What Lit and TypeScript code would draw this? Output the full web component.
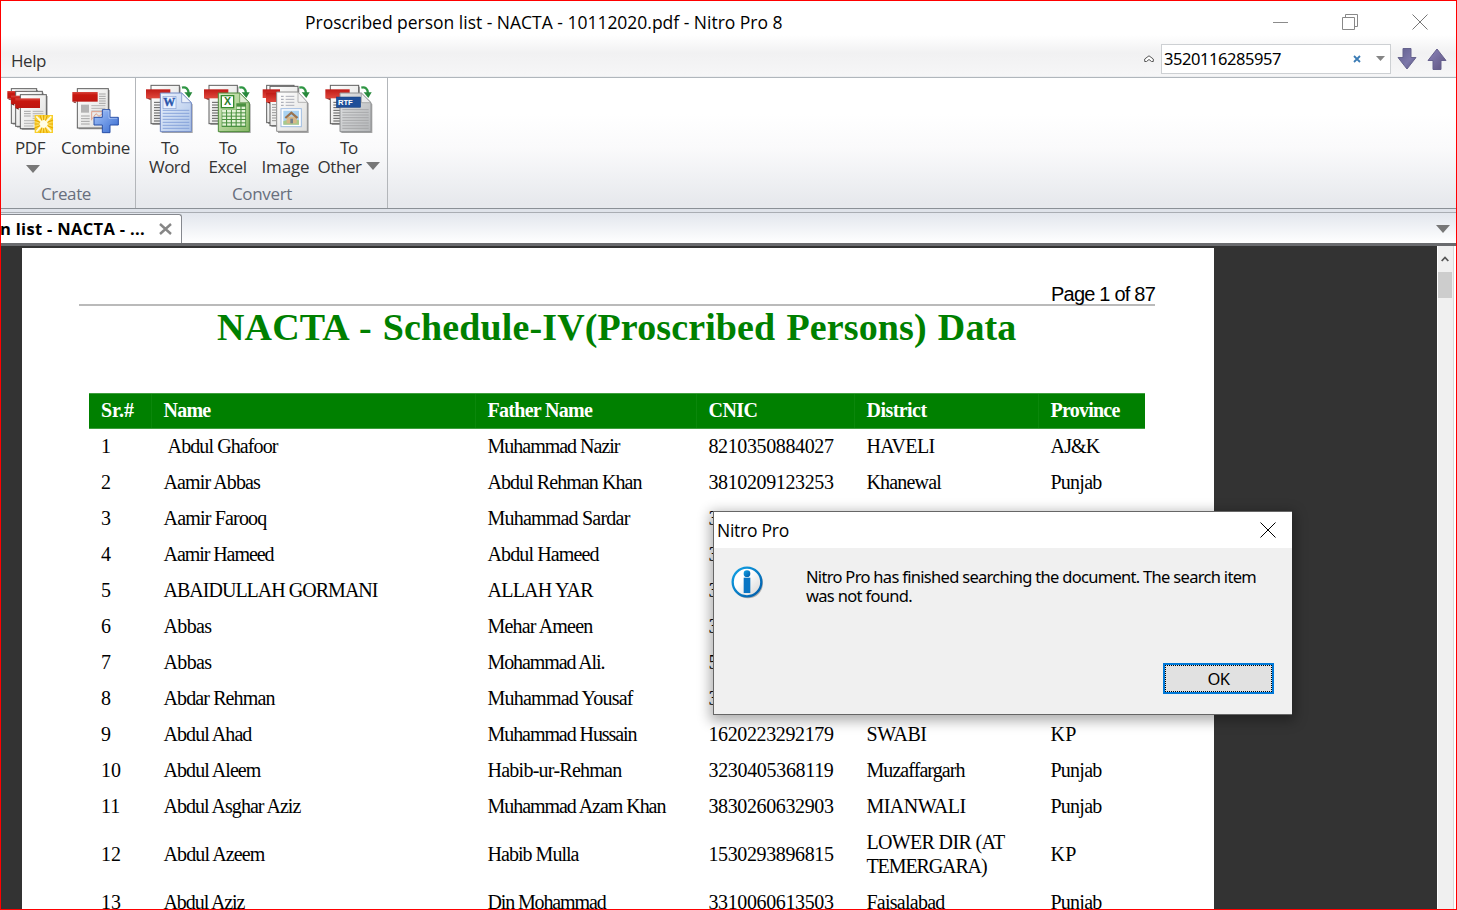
import { LitElement, html, svg, css } from "lit";
import { customElement } from "lit/decorators.js";

const SANS = '"Open Sans", "Noto Sans", sans-serif';
const UI = '"Noto Sans", "Open Sans", sans-serif';
const SERIF = '"Liberation Serif", serif';
const ARIAL = '"Liberation Sans", sans-serif';

const pen = document.createElement("canvas").getContext("2d")!;

/** Sets a line of text with its tracking adjusted to the given advance width. */
function fit(text: string, width: number, font: string) {
  pen.font = font;
  const spacing = (width - pen.measureText(text).width) / Math.max(1, text.length);
  return html`<span class="fit" style="letter-spacing:${spacing.toFixed(3)}px">${text}</span>`;
}

type Cell = [string, number];
const HEAD: Cell[] = [["Sr.#", 33], ["Name", 47], ["Father Name", 105], ["CNIC", 49], ["District", 60], ["Province", 69]];
const ROWS: Cell[][] = [
  [["1", 10], ["\u00a0Abdul Ghafoor", 114], ["Muhammad Nazir", 132], ["8210350884027", 125], ["HAVELI", 68], ["AJ&K", 49]],
  [["2", 10], ["Aamir Abbas", 97.5], ["Abdul Rehman Khan", 154], ["3810209123253", 125], ["Khanewal", 74.5], ["Punjab", 51]],
  [["3", 10], ["Aamir Farooq", 103], ["Muhammad Sardar", 142], ["3440232213253", 125], ["Sialkot", 52], ["Punjab", 51]],
  [["4", 10], ["Aamir Hameed", 110], ["Abdul Hameed", 111], ["3", 10], ["", 0], ["", 0]],
  [["5", 10], ["ABAIDULLAH GORMANI", 214], ["ALLAH YAR", 106], ["3", 10], ["", 0], ["", 0]],
  [["6", 10], ["Abbas", 48], ["Mehar Ameen", 106], ["3", 10], ["", 0], ["", 0]],
  [["7", 10], ["Abbas", 48], ["Mohammad Ali.", 118], ["5", 10], ["", 0], ["", 0]],
  [["8", 10], ["Abdar Rehman", 111], ["Muhammad Yousaf", 146], ["3", 10], ["", 0], ["", 0]],
  [["9", 10], ["Abdul Ahad", 89], ["Muhammad Hussain", 149], ["1620223292179", 125], ["SWABI", 60], ["KP", 26]],
  [["10", 20], ["Abdul Aleem", 98], ["Habib-ur-Rehman", 134], ["3230405368119", 125], ["Muzaffargarh", 98], ["Punjab", 51]],
  [["11", 19], ["Abdul Asghar Aziz", 139], ["Muhammad Azam Khan", 179], ["3830260632903", 125], ["MIANWALI", 99], ["Punjab", 51]],
  [["12", 20], ["Abdul Azeem", 102], ["Habib Mulla", 91], ["1530293896815", 125], ["LOWER DIR (AT|TEMERGARA)", 138], ["KP", 26]],
  [["13", 20], ["Abdul Aziz", 82], ["Din Mohammad", 118], ["3310060613503", 125], ["Faisalabad", 78], ["Punjab", 51]],
];

const defs = svg`<defs>
  <linearGradient id="red" x2="0" y2="1"><stop offset="0" stop-color="#d8473f"/><stop offset=".3" stop-color="#c8180f"/><stop offset="1" stop-color="#bd1610"/></linearGradient>
  <linearGradient id="red2" x2="0" y2="1"><stop offset="0" stop-color="#bf1a16"/><stop offset="1" stop-color="#e0473c"/></linearGradient>
  <linearGradient id="page" x2="1" y2="1"><stop offset="0" stop-color="#fff"/><stop offset="1" stop-color="#dededc"/></linearGradient>
  <linearGradient id="plus" x2="1" y2="1"><stop offset="0" stop-color="#a9c8fb"/><stop offset="1" stop-color="#3569cf"/></linearGradient>
  <linearGradient id="blue" x2="1" y2="1"><stop offset="0" stop-color="#eef4fd"/><stop offset="1" stop-color="#a9c1e8"/></linearGradient>
  <linearGradient id="green" x2="1" y2="1"><stop offset="0" stop-color="#d9ecc6"/><stop offset="1" stop-color="#86b865"/></linearGradient>
  <linearGradient id="grey" x2="1" y2="1"><stop offset="0" stop-color="#e3e4e5"/><stop offset="1" stop-color="#b4b6b8"/></linearGradient>
  <radialGradient id="glow"><stop offset="0" stop-color="#fff"/><stop offset=".4" stop-color="#fff09a"/><stop offset="1" stop-color="#f8cf2c"/></radialGradient>
</defs>`;

const sheet = (x: number, y: number, w: number, h: number) => svg`
  <rect x=${x + 4} y=${y + 4} width=${w} height=${h} fill="#000" opacity=".35"/>
  <rect x=${x} y=${y} width=${w} height=${h} fill="url(#page)" stroke="#5f5f5f" stroke-width="3"/>`;
const bar = (x: number, y: number, w: number, h: number) => svg`
  <rect x=${x} y=${y} width=${w} height=${h} fill="url(#red)"/>
  <path d="M${x} ${y + h}h10v5z" fill="#75100c"/>`;
const lines = (x: number, y: number, w: number, n: number, gap: number, c: string) =>
  Array.from({ length: n }, (_, i) => svg`<path d="M${x} ${y + i * gap}h${w}" stroke=${c} stroke-width="2.6"/>`);
const arrow = (x: number) => svg`
  <path d="M${x} 35c12-3 19 3 20 17" fill="none" stroke="#2f9644" stroke-width="7"/>
  <path d="M${x + 7} 49h24l-10 17z" fill="#27883b"/>`;
const source = (x: number) => svg`
  ${sheet(x + 15, 28, 85, 115)}
  ${lines(x + 24, 79, 20, 8, 8, "#444")}
  <rect x=${x} y="40" width="73" height="27" fill="url(#red2)"/>
  <path d="M${x} 67h14v5z" fill="#8c120e"/>`;
const front = (x: number, fill: string, stroke: string) => svg`
  <path d="M${x + 4} 57h64l29 28v86H${x + 4}z" fill="#000" opacity=".35"/>
  <path d="M${x} 51h64l29 29v87H${x}z" fill=${fill} stroke=${stroke} stroke-width="3"/>
  <path d="M${x + 64} 51v29h29z" fill="#fff" fill-opacity=".6" stroke=${stroke} stroke-width="2"/>`;

const icon = (viewBox: string, body: unknown) =>
  html`<svg class="icon" viewBox=${viewBox}>${defs}${body}</svg>`;

const pdfIcon = icon("15 24 150 150", svg`
  ${sheet(34, 38, 76, 104)}${bar(22, 45, 60, 23)}
  ${sheet(47, 46, 80, 105)}${bar(33, 59, 60, 25)}
  ${sheet(61, 56, 78, 102)}${bar(46, 67, 74, 29)}
  ${lines(72, 106, 20, 3, 7, "#999")}${lines(98, 106, 32, 6, 7, "#aaa")}
  ${lines(72, 134, 28, 3, 8, "#aaa")}
  <rect x="104" y="117" width="55" height="54" fill="url(#glow)"/>
  <path d="M120 118l6 17M142 118l-6 17M104 132l17 7M159 132l-17 7M104 156l17-7M159 156l-17-7M120 171l6-17M142 171l-6-17M131 117v15M131 157v14M104 144h14M145 144h14" stroke="#e9aa00" stroke-width="3.600"/>
  <path d="M109 121l14 15M154 121l-14 15M109 167l14-15M154 167l-14-15" stroke="#fffbe0" stroke-width="5"/>
  <circle cx="131" cy="144" r="11" fill="#fffde8"/>`);

const combineIcon = icon("213 24 150 150", svg`
  ${sheet(232, 38, 93, 118)}
  ${lines(297, 54, 20, 5, 7, "#999")}
  <rect x="243" y="86" width="24" height="24" fill="#b4b4b4"/>
  ${lines(274, 89, 42, 3, 8, "#aaa")}${lines(243, 120, 26, 4, 8, "#999")}
  <path d="M275 133v-26h34M277 128l11-15 9 8 10-8" fill="none" stroke="#e0a28e" stroke-width="3"/>
  ${bar(217, 48, 76, 29)}
  <path d="M307 101h23v23h25v23h-25v23h-23v-23h-25v-23h25z" fill="url(#plus)" stroke="#2950a8" stroke-width="3"/>
  <path d="M310 104h17v23h25" fill="none" stroke="#d5e4ff" stroke-width="2" opacity=".7"/>`);

const wordIcon = icon("435 24 150 150", svg`
  ${source(438)}${front(481, "url(#blue)", "#7089c4")}
  ${lines(488, 103, 80, 7, 9, "#7f9cd8")}
  <rect x="489" y="61" width="39" height="37" fill="#e9f1ff" stroke="#8aa3d4" stroke-width="2"/>
  <text class="glyph" x="508" y="91" font-size="36" text-anchor="middle" fill="#2b57ad" stroke="#2b57ad">W</text>
  ${arrow(546)}`);

const excelIcon = icon("21 24 150 150", svg`
  ${source(24)}${front(67, "url(#green)", "#4b8a38")}
  <path d="M121 82h29v71H77v-52h44z" fill="#4a9140"/>
  ${[0, 1, 2, 3, 4, 5].map((r) => [0, 1, 2, 3, 4].map((c) => svg`<rect x=${79 + c * 14.4} y=${r < 1 && c < 3 ? 102 : 92 + r * 10} width="11" height="7" fill="#e3f2d6"/>`))}
  <rect x="76" y="59" width="37" height="36" fill="#fff" stroke="#348a2b" stroke-width="4"/>
  <text class="glyph sans" x="94.500" y="88" font-size="32" text-anchor="middle" fill="#2b7d2a">X</text>
  ${arrow(130)}`);

const imageIcon = icon("193 24 150 150", svg`
  ${sheet(210, 28, 82, 112)}${sheet(220, 31, 84, 118)}
  <rect x="198" y="40" width="52" height="26" fill="url(#red2)"/>
  <rect x="208" y="50" width="44" height="28" fill="url(#red2)"/><path d="M208 78h12v5z" fill="#8c120e"/>
  ${lines(226, 86, 12, 7, 8, "#888")}
  <path d="M244 54h62l30 28v89h-92z" fill="#000" opacity=".35"/>
  <path d="M240 48h64l28 31v87h-92z" fill="url(#page)" stroke="#8e8e8e" stroke-width="3"/>
  <path d="M304 48v31h28z" fill="#f3f3f3" stroke="#999" stroke-width="2"/>
  ${lines(253, 61, 8, 4, 9, "#8e93a0")}${lines(267, 61, 26, 4, 9, "#a2a6b0")}
  <rect x="253" y="98" width="61" height="54" fill="#fff" stroke="#9fbce2" stroke-width="3"/>
  <rect x="260" y="104" width="47" height="42" fill="#a9d2f2"/>
  <path d="M260 136c14-8 32-6 47-3v13h-47z" fill="#a9c98b"/>
  <path d="M270 122h30v20h-30z" fill="#d7b789"/><path d="M264 124l20-18 21 18-5 4-16-13-16 13z" fill="#9a7350"/>
  <path d="M281 128h8v14h-8z" fill="#73808c"/>
  ${arrow(308)}`);

const otherIcon = icon("383 24 150 150", svg`
  ${source(387)}${front(431, "url(#grey)", "#8f9193")}
  ${lines(438, 101, 79, 8, 8, "#a2a4a6")}
  <rect x="420" y="63" width="73" height="31" fill="#1f4f99" stroke="#143d7d" stroke-width="1.500"/>
  <text class="glyph sans" x="447" y="87" font-size="23" text-anchor="middle" fill="#fff">RTF</text>
  ${arrow(495)}`);

const caret = html`<svg class="caret" viewBox="0 0 14 8"><path d="M0 0h14L7 8z" fill="#777"/></svg>`;

@customElement("app-root")
export class AppRoot extends LitElement {
  static styles = css`
    :host { display: block; }
    * { box-sizing: border-box; }
    .window { position: relative; display: flex; flex-direction: column; width: 1457px; height: 910px; overflow: hidden; border: 1px solid #f00; background: #fff; color: #000; font: 17px "Open Sans", "Noto Sans", sans-serif; }
    .fit { white-space: pre; }
    svg { display: block; flex: none; }
    .top { height: 77px; border-bottom: 1px solid #b0b6bc; background: linear-gradient(#fff 0 34px, #f1f1f2 52px, #f6f6f7 75px, #e4e7ea 76px); flex: none; }
    .titlebar { display: flex; height: 41px; padding-left: 304px; align-items: center; }
    .title { width: 957px; font-size: 17.500px; padding-top: 1px; }
    .controls { display: flex; align-items: center; padding-left: 10px; gap: 54px; }
    .menubar { display: flex; height: 33px; align-items: center; padding-left: 10px; }
    .help { width: 1133px; font-size: 17px; color: #333; padding-top: 3px; }
    .search { display: flex; align-items: center; width: 230px; height: 30px; margin-left: 7px; border: 1px solid #cdd0d3; background: #fff; padding-left: 2px; font: 16.500px "Noto Sans", "Open Sans", sans-serif; }
    .query { width: 189px; }
    .drop { margin-left: 15px; }
    .jump { margin-left: 6px; display: flex; gap: 10px; }
    .ribbon { display: flex; height: 131px; flex: none; border-bottom: 1px solid #8b9096; background: linear-gradient(#fff 0 36px, #fafafb 70px, #e7e9ed 125px); color: #333; }
    .group { display: flex; flex-direction: column; height: 130px; border-right: 1px solid #b3b6ba; padding-top: 6px; }
    .create { width: 135px; }
    .convert { width: 252px; padding-left: 1px; }
    .buttons { display: flex; height: 100px; }
    .button { display: flex; flex-direction: column; align-items: center; line-height: 19px; font-size: 17px; }
    .icon { width: 50px; height: 50px; margin-bottom: 4px; }
    .line { display: flex; height: 19px; align-items: center; gap: 4px; white-space: nowrap; }
    .w58 { width: 58px; } .w73 { width: 73px; } .w65 { width: 65px; } .w52 { width: 51px; } .w64 { width: 65px; } .w62 { width: 61px; }
    .caret { width: 14px; height: 8px; }
    .line .caret { margin-bottom: 2px; }
    .pdfdrop { padding-left: 6px; padding-top: 7px; }
    .caption { text-align: center; line-height: 20px; font-size: 17px; color: #686f7d; }
    .create .caption { padding-right: 4px; }
    .glyph { font-family: "Liberation Serif", serif; font-weight: bold; }
    .glyph.sans { font-family: "Liberation Sans", sans-serif; }
    .tabs { display: flex; justify-content: space-between; height: 37px; flex: none; padding-top: 5px; border-bottom: 3px solid #6a6b6e; background: linear-gradient(#dfe3ea 0 3px, #a9adb3 3px 4px, #e2e6ed 4px, #fff 34px); }
    .tab { display: flex; align-items: center; width: 181px; height: 29px; background: #fff; border: 1px solid #85888e; border-left: 0; border-bottom: 0; border-radius: 0 3px 0 0; font-weight: 700; font-size: 16.500px; }
    .tabname { width: 159px; margin-left: -1px; padding-bottom: 2px; }
    .tabs .caret { margin: 11px 6px 0 0; }
    .view { display: flex; flex: 1; min-height: 0; background: #333; padding-left: 21px; }
    .paper { width: 1192px; margin-top: 2px; height: 670px; flex: none; background: #fff; padding: 0 59px 0 57px; font-family: "Liberation Serif", serif; }
    .pageno { height: 58px; border-bottom: 2px solid #bababa; text-align: right; padding-top: 34px; line-height: 24px; font-family: "Liberation Sans", sans-serif; font-size: 20px; }
    .heading { height: 87px; padding-left: 138px; line-height: 43px; font-size: 38px; font-weight: 700; color: #008000; word-spacing: 1.500px; }
    .row { display: grid; grid-template-columns: 62px 324px 221px 158px 184px 107px; width: 1056px; height: 36px; margin-left: 10px; font-size: 20px; line-height: 24px; padding-top: 5px; }
    .row.tall { height: 60px; align-items: center; padding: 0 0 2px; }
    .row.head { background: #008000; color: #fff; font-weight: 700; border: 1px solid #3e9e3e; border-width: 1px 0; padding: 0; }
    .head .cell { border-left: 1px solid #0b870b; line-height: 32px; padding-left: 11.500px; }
    .head .cell:first-child { border-left: 0; padding-left: 12px; }
    .cell { padding-left: 12.500px; }
    .cell:first-child { padding-left: 12px; }
    .part { display: block; }
    .track { width: 16px; margin-left: 223px; background: #f0f0f0; display: flex; flex-direction: column; align-items: center; border-left: 1px solid #fff; }
    .up { padding: 10px 2px 0 0; height: 26px; }
    .thumb { width: 14px; height: 26px; background: #cdcdcd; margin-right: 1px; }
    .edge { flex: 1; border-left: 1px solid #d9d9d9; background: #fff; }
    .dialog { position: absolute; left: 712px; top: 511px; width: 579px; height: 203px; border: 1px solid #666; border-right: 0; border-top: 0; background: #f0f0f0; box-shadow: 0 -1px #666, 0 3px 12px 3px rgba(0,0,0,.32); display: flex; flex-direction: column; font: 16.500px "Noto Sans", "Open Sans", sans-serif; }
    .dialogbar { display: flex; justify-content: space-between; align-items: center; height: 36px; background: #fff; padding: 0 16px 1px 3px; font: 17.500px "Open Sans", "Noto Sans", sans-serif; }
    .message { display: flex; height: 115px; padding: 18px 0 0 17px; gap: 42px; }
    .copy { line-height: 19px; padding-top: 1px; }
    .actions { display: flex; justify-content: flex-end; padding-right: 18px; }
    .ok { display: flex; align-items: center; justify-content: center; width: 111px; height: 31px; border: 2px solid #0078d7; background: #e1e1e1; }
    .focus { display: flex; align-items: center; justify-content: center; width: 107px; height: 27px; border: 1px dotted #000; }
  `;

  private cell([text, width]: Cell, bold = false) {
    const font = `${bold ? "bold " : ""}20px ${SERIF}`;
    return html`<div class="cell">${text.split("|").map((s, i) => html`<span class="part">${fit(s, i ? 120 : width, font)}</span>`)}</div>`;
  }

  private button(width: string, art: unknown, first: [string, number], second: unknown) {
    return html`<div class="button ${width}">${art}
      <div class="line">${fit(first[0], first[1], `17px ${SANS}`)}</div>${second}</div>`;
  }

  render() {
    const label = (s: string, w: number) => fit(s, w, `17px ${SANS}`);
    return html`<div class="window">
      <div class="top">
        <div class="titlebar">
          <div class="title">${fit("Proscribed person list - NACTA - 10112020.pdf - Nitro Pro 8", 477.5, `17.5px ${SANS}`)}</div>
          <div class="controls">
            <svg width="16" height="16"><path d="M1 8.500h15" stroke="#8b8b8b"/></svg>
            <svg width="16" height="16"><path d="M.5 3.500h12v12H.500zM3.500 3V.500h12v12H13" fill="none" stroke="#888"/></svg>
            <svg width="16" height="16"><path d="M.5.500l15 15M15.500.500l-15 15" stroke="#777"/></svg>
          </div>
        </div>
        <div class="menubar">
          <div class="help">${label("Help", 35)}</div>
          <svg width="10" height="8" viewBox="0 0 10 8"><path d="M.7 4L5 .8 9.300 4v2.500H7.500L5 4.500 2.500 6.500H.700z" fill="#fff" stroke="#555"/></svg>
          <div class="search">
            <div class="query">${fit("3520116285957", 117, `16.5px ${UI}`)}</div>
            <svg width="8" height="8"><path d="M1 1l6 6M7 1L1 7" stroke="#3b7cb5" stroke-width="1.800"/></svg>
            <svg class="drop" width="9" height="5"><path d="M0 0h9L4.500 5z" fill="#858585"/></svg>
          </div>
          <div class="jump">
            <svg width="20" height="22" viewBox="0 0 20 22"><defs><linearGradient id="jd" x2="1" y2="1"><stop stop-color="#615f8f"/><stop offset=".6" stop-color="#7d78aa"/><stop offset="1" stop-color="#55517f"/></linearGradient></defs><path d="M6 .5h8v9h5L10 21 1 9.500h5z" fill="url(#jd)" stroke="#66638d"/></svg>
            <svg width="20" height="22" viewBox="0 0 20 22"><defs><linearGradient id="ju" x2="1" y2="1"><stop stop-color="#8d86bd"/><stop offset="1" stop-color="#5d527e"/></linearGradient></defs><path d="M6 21.500h8v-9h5L10 1 1 12.500h5z" fill="url(#ju)" stroke="#66608d"/></svg>
          </div>
        </div>
      </div>
      <div class="ribbon">
        <div class="group create">
          <div class="buttons">
            ${this.button("w58", pdfIcon, ["PDF", 30], html`<div class="line pdfdrop">${caret}</div>`)}
            ${this.button("w73", combineIcon, ["Combine", 69], "")}
          </div>
          <div class="caption">${label("Create", 50)}</div>
        </div>
        <div class="group convert">
          <div class="buttons">
            ${this.button("w65", wordIcon, ["To", 17], html`<div class="line">${label("Word", 41)}</div>`)}
            ${this.button("w52", excelIcon, ["To", 17], html`<div class="line">${label("Excel", 38)}</div>`)}
            ${this.button("w64", imageIcon, ["To", 17], html`<div class="line">${label("Image", 48)}</div>`)}
            ${this.button("w62", otherIcon, ["To", 17], html`<div class="line">${label("Other", 44)}${caret}</div>`)}
          </div>
          <div class="caption">${label("Convert", 60)}</div>
        </div>
      </div>
      <div class="tabs">
        <div class="tab">
          <div class="tabname">${fit("n list - NACTA - ...", 145, `bold 16.5px ${SANS}`)}</div>
          <svg width="13" height="12"><path d="M1 1l11 10M12 1L1 11" stroke="#868686" stroke-width="2.400"/></svg>
        </div>
        ${caret}
      </div>
      <div class="view">
        <div class="paper">
          <div class="pageno">${fit("Page 1 of 87", 104, `20px ${ARIAL}`)}</div>
          <div class="heading">${fit("NACTA - Schedule-IV(Proscribed Persons) Data", 795.5, `bold 38px ${SERIF}`)}</div>
          <div class="row head">${HEAD.map((c) => this.cell(c, true))}</div>
          ${ROWS.map((r) => html`<div class="row ${r[4][0].includes("|") ? "tall" : ""}">${r.map((c) => this.cell(c))}</div>`)}
        </div>
        <div class="track">
          <div class="up"><svg width="8" height="6"><path d="M.7 5L4 1.500 7.300 5" fill="none" stroke="#555" stroke-width="1.800"/></svg></div>
          <div class="thumb"></div>
        </div>
        <div class="edge"></div>
      </div>
      <div class="dialog">
        <div class="dialogbar">${fit("Nitro Pro", 72, `17.5px ${SANS}`)}
          <svg width="16" height="16"><path d="M.5.500l15 15M15.500.500l-15 15" stroke="#000"/></svg>
        </div>
        <div class="message">
          <svg width="33" height="33" viewBox="0 0 99 99"><defs><linearGradient id="ring" x2="1" y2="1"><stop stop-color="#12a3e6"/><stop offset="1" stop-color="#005aa8"/></linearGradient><linearGradient id="disc" x2="1" y2="1"><stop offset=".4" stop-color="#fff"/><stop offset="1" stop-color="#d2d2d2"/></linearGradient></defs>
            <circle cx="51" cy="52" r="45" fill="#000" opacity=".28"/><circle cx="48" cy="48" r="43" fill="url(#disc)" stroke="url(#ring)" stroke-width="7"/><circle cx="48" cy="23" r="10" fill="url(#ring)"/><path d="M38 35h20v46H38z" fill="#0a76c4"/></svg>
          <div class="copy"><div>${fit("Nitro Pro has finished searching the document. The search item", 450, `16.5px ${UI}`)}</div><div>${fit("was not found.", 106, `16.5px ${UI}`)}</div></div>
        </div>
        <div class="actions"><div class="ok"><div class="focus">${fit("OK", 22, `16.5px ${UI}`)}</div></div></div>
      </div>
    </div>`;
  }
}
